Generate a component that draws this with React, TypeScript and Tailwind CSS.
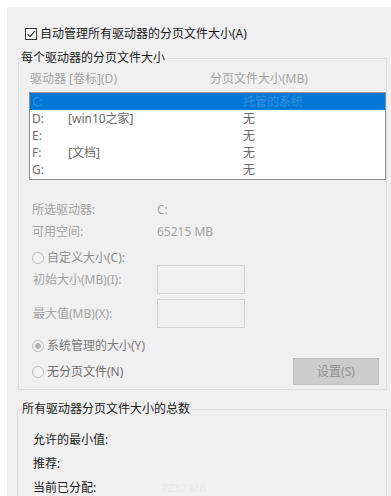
import React from 'react';

const font = "font-['Noto_Sans','Noto_Sans_CJK_SC',sans-serif]";

interface Drive {
  letter: string;
  label: string;
  size: string;
}

const drives: Drive[] = [
  { letter: 'C:', label: '', size: '托管的系统' },
  { letter: 'D:', label: '[win10之家]', size: '无' },
  { letter: 'E:', label: '', size: '无' },
  { letter: 'F:', label: '[文档]', size: '无' },
  { letter: 'G:', label: '', size: '无' },
];

function Radio({ label, checked = false, color }: { label: string; checked?: boolean; color: string }) {
  return (
    <div className="flex items-center h-[20px]">
      <span className="w-[12px] h-[12px] rounded-full border border-[#bcbcbc] bg-[#f4f4f4] flex items-center justify-center">
        {checked && <span className="w-[6px] h-[6px] rounded-full bg-[#b4b4b4]" />}
      </span>
      <span className={`ml-[3px] ${color}`}>{label}</span>
    </div>
  );
}

export default function App() {
  return (
    <div className={`w-[391px] h-[496px] overflow-hidden bg-white pl-[7px] pt-[7px] text-[12px] leading-[16px] ${font}`}>
      <div className="h-full bg-[#f0f0f0]">
        {/* Auto-manage checkbox */}
        <div className="flex items-center h-[17px] pt-[18px] box-content pl-[18px] text-[#1a1a1a]">
          <span className="w-[12px] h-[12px] border border-[#333] bg-white flex items-center justify-center">
            <svg width="10" height="10" viewBox="0 0 10 10">
              <path d="M1.5 5.2 L4 7.7 L8.8 2.2" fill="none" stroke="#222" strokeWidth="1.2" />
            </svg>
          </span>
          <span className="ml-[3px]">自动管理所有驱动器的分页文件大小(A)</span>
        </div>

        {/* Per-drive group */}
        <fieldset className="mt-[8px] ml-[11px] w-[367px] border border-[#dcdcdc] pb-[4px]">
          <legend className="ml-[2px] pr-[2px] text-[#1a1a1a]">每个驱动器的分页文件大小</legend>

          <div className="flex mt-[5px] pl-[11px] text-[#a3a3a3]">
            <span className="w-[180px]">驱动器 [卷标](D)</span>
            <span>分页文件大小(MB)</span>
          </div>

          <div className="mt-[5px] ml-[10px] w-[357px] h-[88px] border border-[#8f8f8f] bg-white">
            {drives.map((d, i) => (
              <div
                key={d.letter}
                className={`grid grid-cols-[36px_175px_1fr] pl-[2px] h-[17px] items-center ${
                  i === 0 ? 'bg-[#0078d7] text-[#3a8ddc]' : 'text-[#6a6a6a]'
                }`}
              >
                <span>{d.letter}</span>
                <span>{d.label}</span>
                <span>{d.size}</span>
              </div>
            ))}
          </div>

          <div className="mt-[19px] pl-[13px] text-[#a3a3a3]">
            <div className="flex items-center h-[22px]">
              <span className="w-[125px]">所选驱动器:</span>
              <span>C:</span>
            </div>
            <div className="flex items-center h-[22px]">
              <span className="w-[125px]">可用空间:</span>
              <span>65215 MB</span>
            </div>
          </div>

          <div className="mt-[7px] pl-[13px] h-[15px] flex items-center">
            <Radio label="自定义大小(C):" color="text-[#8e8e8e]" />
          </div>

          <div className="pl-[14px] text-[#a3a3a3] flex flex-col gap-[5px]">
            <div className="flex items-center">
              <span className="w-[124px]">初始大小(MB)(I):</span>
              <span className="w-[88px] h-[29px] border border-[#d2d2d2] bg-[#f0f0f0]" />
            </div>
            <div className="flex items-center">
              <span className="w-[124px]">最大值(MB)(X):</span>
              <span className="w-[88px] h-[29px] border border-[#d2d2d2] bg-[#f0f0f0]" />
            </div>
          </div>

          <div className="mt-[8px] pl-[13px] pr-[7px] flex justify-between items-start">
            <div className="flex flex-col gap-[6px]">
              <Radio label="系统管理的大小(Y)" checked color="text-[#7a7a7a]" />
              <Radio label="无分页文件(N)" color="text-[#6e6e6e]" />
            </div>
            <button className="mt-[22px] w-[86px] h-[27px] bg-[#cccccc] border border-[#bfbfbf] text-[#8f8f8f] text-[12px]">
              设置(S)
            </button>
          </div>
        </fieldset>

        {/* Totals group */}
        <fieldset className="mt-[11px] ml-[10px] w-[370px] h-[120px] border border-[#dcdcdc]">
          <legend className="ml-[4px] pr-[2px] text-[#1a1a1a]">所有驱动器分页文件大小的总数</legend>
          <div className="mt-[11px] pl-[15px] text-[#1a1a1a]">
            <div className="h-[24px] flex items-center">允许的最小值:</div>
            <div className="h-[24px] flex items-center">推荐:</div>
            <div className="h-[24px] flex items-center">
              <span className="w-[128px]">当前已分配:</span>
              <span className="text-[#e8e8e8] text-[11px]">7232 MB</span>
            </div>
          </div>
        </fieldset>
      </div>
    </div>
  );
}
